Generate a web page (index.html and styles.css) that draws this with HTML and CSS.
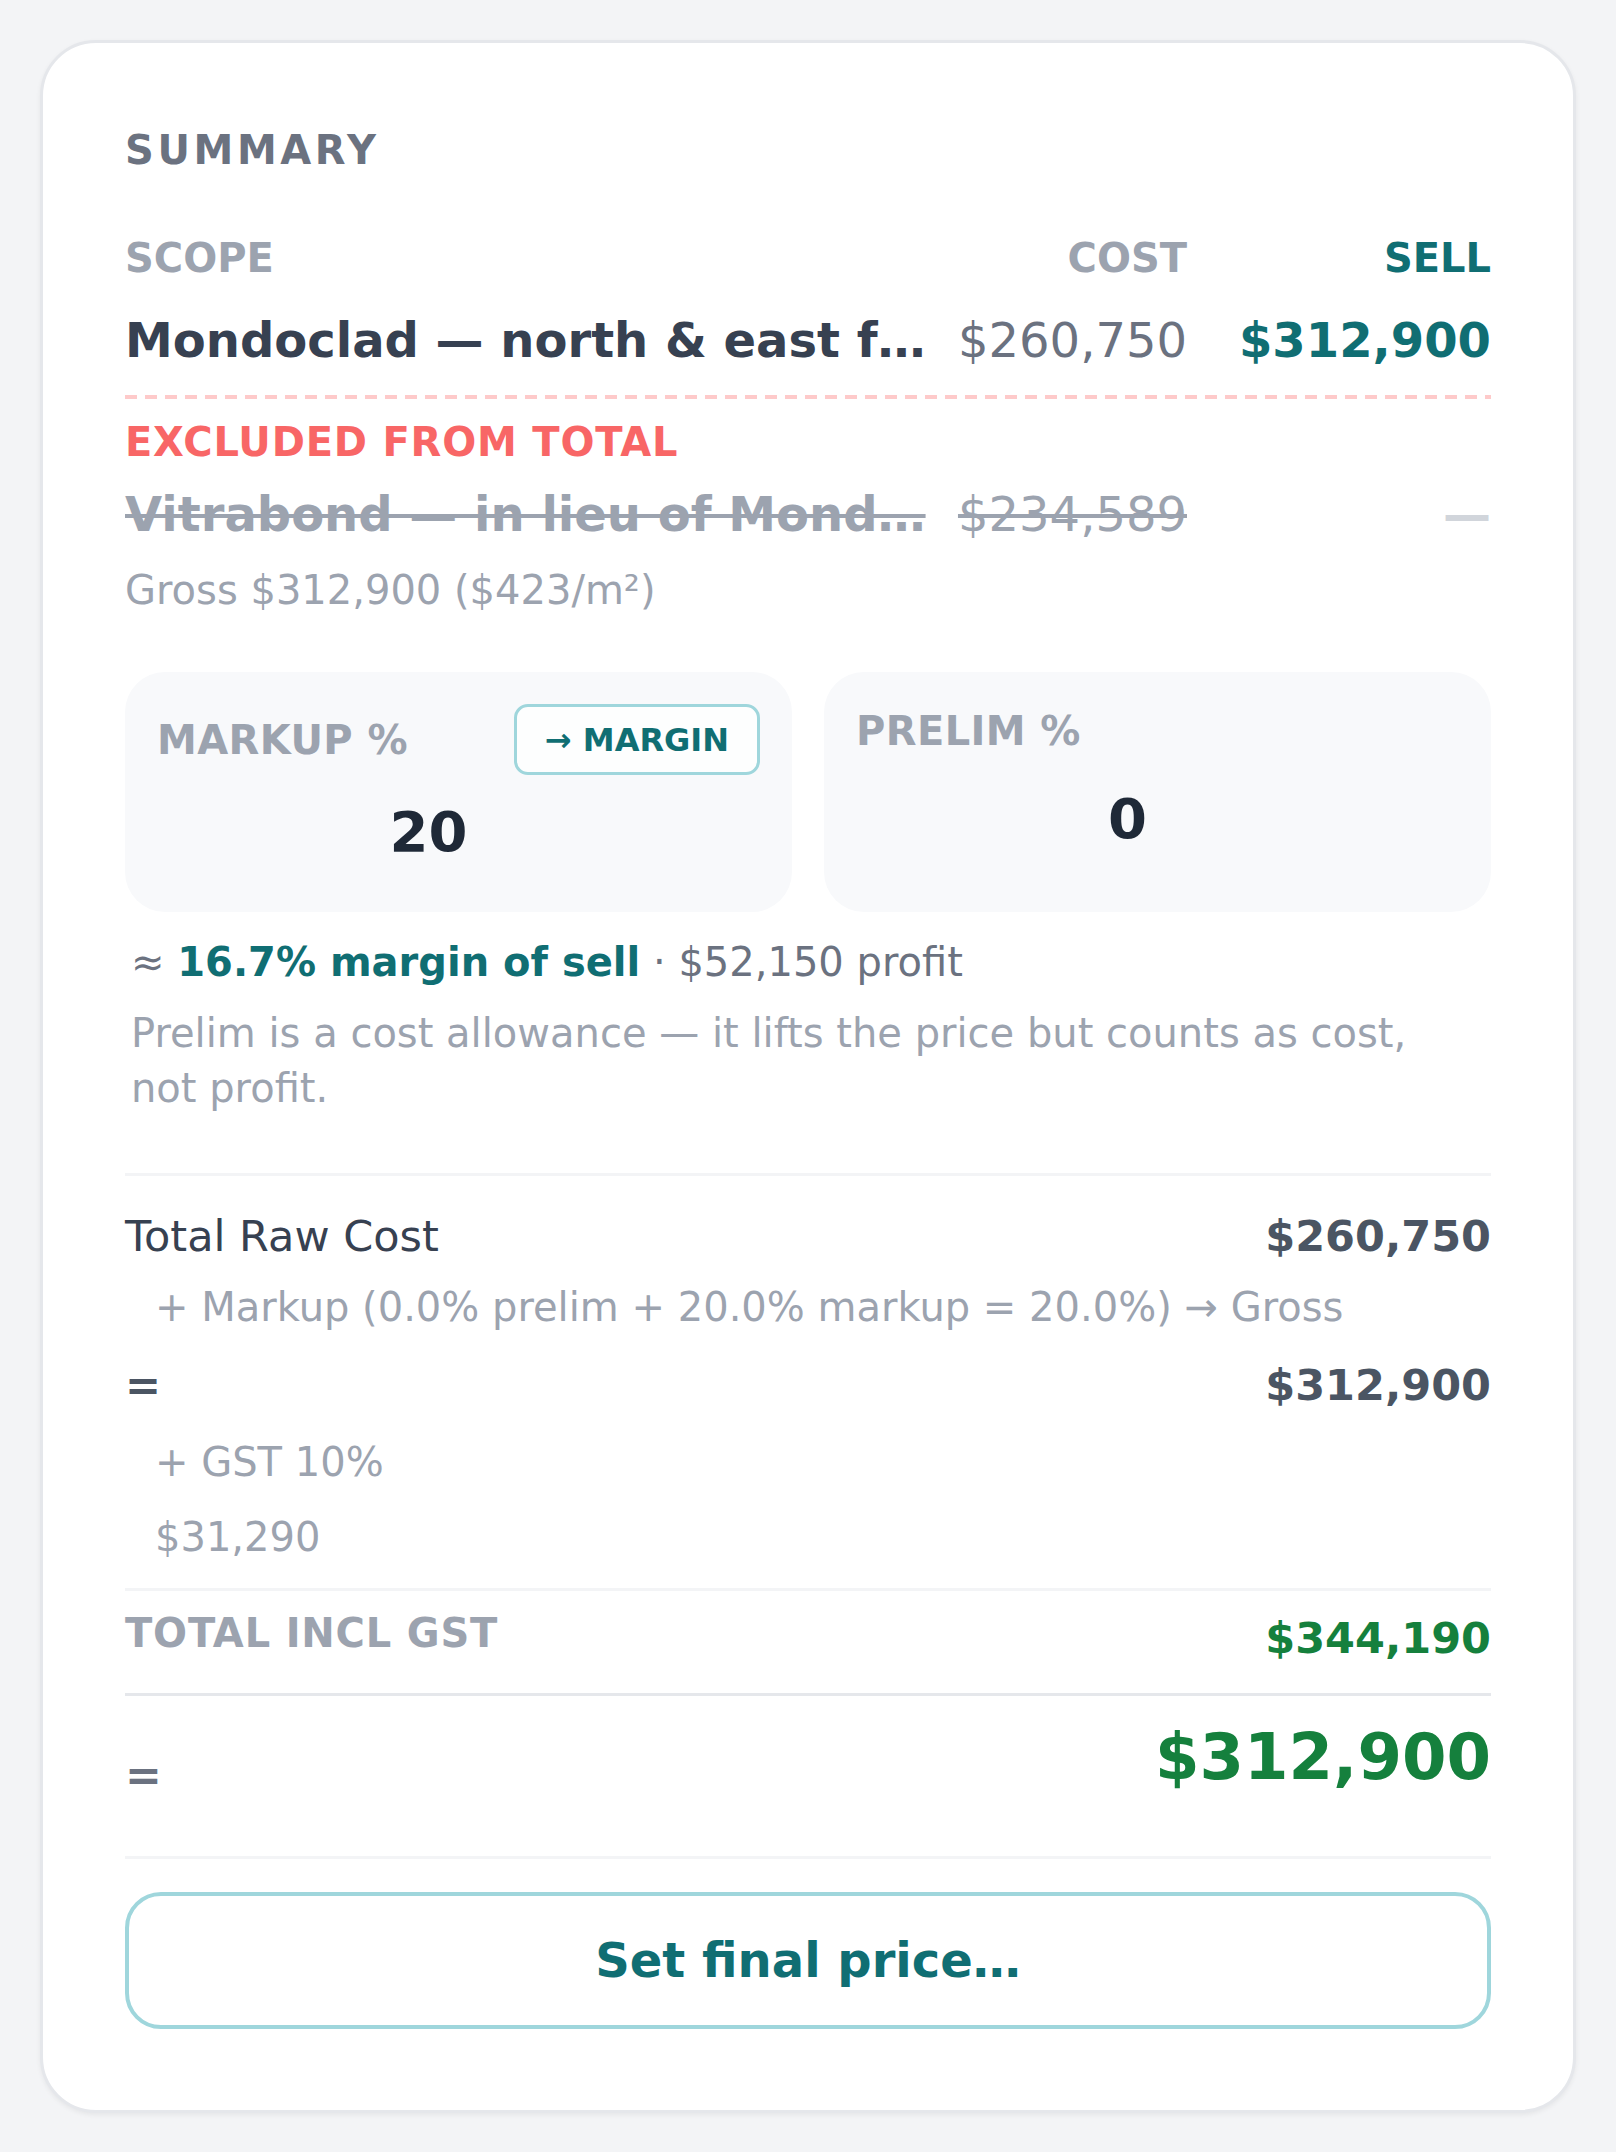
FILE: index.html
```html
<!DOCTYPE html>
<html lang="en">
<head>
<meta charset="utf-8">
<title>Summary</title>
<link rel="stylesheet" href="styles.css">
</head>
<body>
<div class="page">
  <section class="card">
    <h2 class="title">Summary</h2>

    <div class="scope-grid">
      <div class="th">Scope</div>
      <div class="th th-right">Cost</div>
      <div class="th th-right th-sell">Sell</div>
      <div class="scope-name">Mondoclad — north &amp; east f…</div>
      <div class="cost">$260,750</div>
      <div class="sell">$312,900</div>
    </div>

    <div class="excluded">
      <div class="dash-rule"></div>
      <div class="excluded-label">Excluded from total</div>
      <div class="scope-grid excluded-row">
        <div class="scope-name struck">Vitrabond — in lieu of Mond…</div>
        <div class="cost struck">$234,589</div>
        <div class="sell-none">—</div>
      </div>
    </div>

    <div class="gross">Gross $312,900 ($423/m²)</div>

    <div class="inputs">
      <div class="field">
        <div class="field-head">
          <span class="field-label">Markup %</span>
          <button class="chip" type="button">→ Margin</button>
        </div>
        <div class="field-value field-value-markup">20</div>
      </div>
      <div class="field">
        <div class="field-label field-label-top">Prelim %</div>
        <div class="field-value field-value-prelim">0</div>
      </div>
    </div>

    <p class="margin-note"><span class="approx">≈</span> <strong>16.7% margin of sell</strong> · $52,150 profit</p>
    <p class="hint">Prelim is a cost allowance — it lifts the price but counts as cost, not profit.</p>

    <div class="breakdown">
      <div class="line">
        <span class="line-label">Total Raw Cost</span>
        <span class="line-value">$260,750</span>
      </div>
      <div class="sub">+ Markup (0.0% prelim + 20.0% markup = 20.0%) → Gross</div>
      <div class="line line-eq">
        <span class="eq">=</span>
        <span class="line-value">$312,900</span>
      </div>
      <div class="sub sub-gst">+ GST 10%</div>
      <div class="sub sub-gst">$31,290</div>
    </div>

    <div class="total-gst">
      <span class="total-gst-label">Total incl GST</span>
      <span class="total-gst-value">$344,190</span>
    </div>

    <div class="final">
      <span class="final-eq">=</span>
      <span class="final-value">$312,900</span>
    </div>

    <div class="action">
      <button class="final-btn" type="button">Set final price…</button>
    </div>
  </section>
</div>
</body>
</html>
```

FILE: styles.css
```css
* {
  box-sizing: border-box;
}

html, body {
  margin: 0;
  padding: 0;
  background: #f3f4f6;
  font-family: "DejaVu Sans", "Noto Sans", sans-serif;
}

.page {
  padding: 40px;
}

.card {
  background: #ffffff;
  border: 3px solid #e5e7eb;
  border-radius: 56px;
  box-shadow: 0 2px 5px rgba(0, 0, 0, 0.06);
  padding: 83px 82px 81px 82px;
}

.title {
  margin: 0;
  font-size: 40px;
  line-height: 48px;
  font-weight: 700;
  letter-spacing: 0.09em;
  text-transform: uppercase;
  color: #6b7280;
}

/* scope table */
.scope-grid {
  display: grid;
  grid-template-columns: minmax(0, 1fr) auto 276px;
  column-gap: 28px;
  row-gap: 29px;
  margin-top: 60px;
}

.th {
  font-size: 40px;
  line-height: 48px;
  font-weight: 700;
  text-transform: uppercase;
  color: #9ca3af;
}

.th-right {
  text-align: right;
}

.th-sell {
  color: #106e73;
}

.scope-name {
  font-size: 48px;
  line-height: 58px;
  font-weight: 700;
  color: #374151;
  white-space: nowrap;
}

.cost {
  font-size: 48px;
  line-height: 58px;
  color: #6b7280;
  text-align: right;
  white-space: nowrap;
}

.sell {
  font-size: 48px;
  line-height: 58px;
  font-weight: 700;
  color: #106e73;
  text-align: right;
  white-space: nowrap;
}

.excluded {
  margin-top: 26px;
}

.dash-rule {
  height: 4px;
  background: repeating-linear-gradient(90deg, #fecaca 0, #fecaca 12px, transparent 12px, transparent 20px);
}

.excluded-label {
  margin-top: 19px;
  font-size: 40px;
  line-height: 48px;
  font-weight: 700;
  letter-spacing: 0.02em;
  text-transform: uppercase;
  color: #f86666;
}

.excluded-row {
  margin-top: 19px;
}

.struck {
  color: #9ca3af;
  text-decoration: line-through;
  text-decoration-thickness: 4px;
  text-decoration-color: #9ca3af;
}

.sell-none {
  font-size: 48px;
  line-height: 58px;
  font-weight: 700;
  color: #d1d5db;
  text-align: right;
}

.gross {
  margin-top: 23px;
  font-size: 40px;
  line-height: 48px;
  color: #9ca3af;
}

/* inputs */
.inputs {
  margin-top: 58px;
  display: grid;
  grid-template-columns: 1fr 1fr;
  column-gap: 32px;
}

.field {
  height: 240px;
  background: #f8f9fb;
  border-radius: 40px;
  padding: 32px;
  display: flex;
  flex-direction: column;
}

.field-head {
  display: flex;
  align-items: center;
  justify-content: space-between;
  height: 71px;
}

.field-label {
  font-size: 40px;
  line-height: 48px;
  font-weight: 700;
  letter-spacing: 0.01em;
  text-transform: uppercase;
  color: #9ca3af;
}

.field-label-top {
  line-height: 54px;
}

.chip {
  height: 71px;
  padding: 0 28px;
  border: 3px solid #9fd6dc;
  border-radius: 14px;
  background: #fdfefe;
  font-family: inherit;
  font-size: 32px;
  line-height: 38px;
  font-weight: 700;
  text-transform: uppercase;
  color: #106e73;
}

.field-value {
  font-size: 56px;
  line-height: 66px;
  font-weight: 700;
  color: #1f2937;
  text-align: center;
  padding-right: 60px;
}

.field-value-markup {
  margin-top: 24px;
}

.field-value-prelim {
  margin-top: 28px;
}

/* notes */
.margin-note {
  margin: 26px 0 0 0;
  padding: 0 6px;
  font-size: 40px;
  line-height: 48px;
  color: #6b7280;
}

.margin-note strong {
  color: #106e73;
  font-weight: 700;
}

.hint {
  margin: 20px 0 0 0;
  padding: 0 20px 0 6px;
  font-size: 40px;
  line-height: 55px;
  color: #9ca3af;
}

/* breakdown */
.breakdown {
  margin-top: 57px;
  border-top: 3px solid #f3f4f6;
  padding-top: 34px;
}

.line {
  display: flex;
  justify-content: space-between;
  align-items: baseline;
  font-size: 43px;
  line-height: 52px;
}

.line-label {
  color: #374151;
}

.line-value {
  font-weight: 700;
  color: #4b5563;
}

.line-eq {
  margin-top: 28px;
}

.eq {
  font-weight: 700;
  color: #4b5563;
}

.sub {
  margin-top: 21px;
  padding-left: 30px;
  font-size: 40px;
  line-height: 48px;
  color: #9ca3af;
}

.sub-gst {
  margin-top: 27px;
}

.total-gst {
  margin-top: 27px;
  border-top: 3px solid #f3f4f6;
  padding-top: 18px;
  display: flex;
  justify-content: space-between;
  align-items: flex-start;
}

.total-gst-label {
  font-size: 40px;
  line-height: 48px;
  font-weight: 700;
  letter-spacing: 0.02em;
  text-transform: uppercase;
  color: #9ca3af;
}

.total-gst-value {
  padding-top: 5px;
  font-size: 43px;
  line-height: 48px;
  font-weight: 700;
  color: #15803d;
}

.final {
  margin-top: 31px;
  border-top: 3px solid #e5e7eb;
  padding-top: 23px;
  display: flex;
  justify-content: space-between;
  align-items: flex-end;
}

.final-eq {
  font-size: 44px;
  line-height: 40px;
  font-weight: 700;
  color: #6b7280;
}

.final-value {
  font-size: 64px;
  line-height: 76px;
  font-weight: 700;
  color: #15803d;
}

.action {
  margin-top: 61px;
  border-top: 3px solid #f3f4f6;
  padding-top: 33px;
}

.final-btn {
  display: block;
  width: 100%;
  height: 137px;
  border: 4px solid #9fd6dc;
  border-radius: 36px;
  background: #ffffff;
  font-family: inherit;
  font-size: 48px;
  line-height: 129px;
  font-weight: 700;
  color: #106e73;
  padding: 0;
}
```
